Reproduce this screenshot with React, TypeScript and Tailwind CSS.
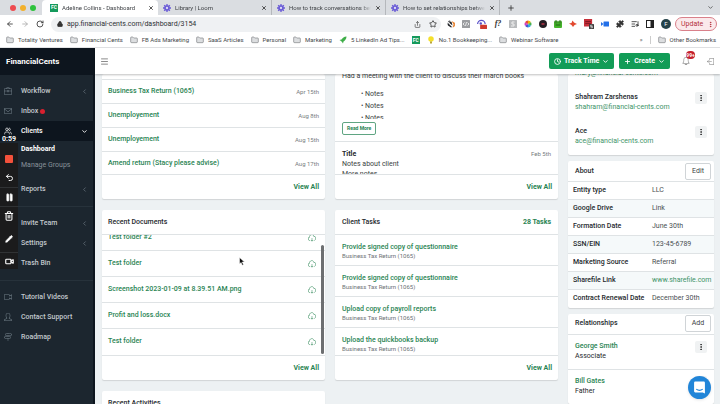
import type { ComponentType, ReactNode } from 'react';
import {
  ArrowLeft, ArrowRight, RotateCw, Lock, Share, Star, X, Plus, ChevronDown, ChevronLeft,
  EllipsisVertical, Folder, Puzzle, ListMusic, Undo2, Pause, Trash2, Pencil, Video, Users, Clock, Menu,
} from 'lucide-react';
import {
  SlBriefcase, SlEnvolope, SlCamrecorder, SlUser, SlDirections, SlLogout, SlBell, SlCloudDownload,
} from 'react-icons/sl';

type IconType = ComponentType<{ className?: string }>;

function FcLogo() {
  return (
    <span className="flex size-[8px] shrink-0 items-center justify-center bg-[#159a5c] text-[5px] font-bold text-white">
      FC
    </span>
  );
}

function LoomLogo() {
  return (
    <svg viewBox="0 0 24 24" className="size-[8px] shrink-0" aria-hidden="true">
      <circle cx="12" cy="12" r="8" fill="#6a5bd6" />
      <path d="M12 0v24M0 12h24M3.5 3.5l17 17M20.5 3.5l-17 17" stroke="#6a5bd6" strokeWidth="4" />
      <circle cx="12" cy="12" r="3.5" fill="#dcdcf5" />
    </svg>
  );
}

function BrowserTab({ title, icon, active = false }: { title: string; icon: ReactNode; active?: boolean }) {
  return (
    <div
      className={`flex h-full items-center gap-1 pr-[4px] ${
        active ? 'w-[116px] rounded-t-[4px] bg-white pl-[8px]' : 'w-[114px] border-r border-[#b5b8bc] pl-[5px]'
      }`}
    >
      {icon}
      <span className="min-w-0 flex-1 overflow-hidden mask-[linear-gradient(to_right,black_88%,transparent)] text-[6px] leading-[9px] whitespace-nowrap text-[#3e4145]">
        {title}
      </span>
      <button type="button" aria-label={`Close ${title}`}>
        <X className="size-[6px] text-[#222]" strokeWidth={3} />
      </button>
    </div>
  );
}

function Extensions() {
  const box = 'size-[8px] shrink-0';
  return (
    <div className="flex shrink-0 items-center gap-[7px]">
      <svg viewBox="0 0 16 16" className={box} aria-hidden="true">
        <path d="M7 1a4 4 0 0 0-5 5l8 8-2 1-6-4a7 7 0 0 1 5-10z" fill="#1f2125" />
        <path d="M4 2l5 2 2 7-6-5z" fill="#1f2125" />
        <path d="M9 2l6 3a6 6 0 0 1-4 10l2-6z" fill="#e98a3c" />
      </svg>
      <svg viewBox="0 0 16 16" className={box} aria-hidden="true">
        <rect width="16" height="16" rx="1" fill="#9b9da0" />
        <path d="M5 5L2 8l3 3M11 5l3 3-3 3M9 4l-2 8" stroke="#fff" strokeWidth="1.5" fill="none" />
      </svg>
      <svg viewBox="0 0 16 16" className="size-[10px] shrink-0" aria-hidden="true">
        <path d="M1 8a6 6 0 0 1 12 0" stroke="#5a50c8" strokeWidth="2" fill="none" />
        <circle cx="6" cy="7" r="2" fill="#5a50c8" />
        <rect x="5" y="9" width="11" height="7" rx="1" fill="#cf3a2e" />
      </svg>
      <span className="w-[8px] text-center font-['Liberation_Serif',serif] text-[8px] leading-[8px] font-bold text-[#333] italic">f?</span>
      <svg viewBox="0 0 16 16" className={box} aria-hidden="true">
        <rect width="16" height="16" rx="1" fill="#b9bbbd" />
        <path d="M11 4H6v4h4v4H4" stroke="#eee" strokeWidth="2" fill="none" />
      </svg>
      <svg viewBox="0 0 16 16" className={box} aria-hidden="true">
        <path d="M8 8V1a7 7 0 0 1 6 3.500z" fill="#f0b400" />
        <path d="M8 8l6-3.500a7 7 0 0 1 0 7z" fill="#4ab04f" />
        <path d="M8 8l6 3.500A7 7 0 0 1 8 15z" fill="#2ea8e0" />
        <path d="M8 8v7a7 7 0 0 1-6-3.500z" fill="#4a55d0" />
        <path d="M8 8l-6 3.500a7 7 0 0 1 0-7z" fill="#d03fc0" />
        <path d="M8 8L2 4.500A7 7 0 0 1 8 1z" fill="#e8483a" />
      </svg>
      <svg viewBox="0 0 16 16" className={box} aria-hidden="true">
        <circle cx="8" cy="8" r="8" fill="#241c22" />
        <path d="M5 6h6v4H5z" fill="#8f2c3c" />
      </svg>
      <svg viewBox="0 0 16 16" className={box} aria-hidden="true">
        <rect y="3" width="16" height="13" rx="2" fill="#45b52b" />
        <circle cx="4" cy="4" r="3.500" fill="#3a8f26" />
        <circle cx="12" cy="4" r="3.500" fill="#3a8f26" />
        <path d="M3 10h10" stroke="#205c14" strokeWidth="2" />
      </svg>
      <svg viewBox="0 0 16 16" className={box} aria-hidden="true">
        <path d="M0 7l5-1 2-5 3 4 6 3-5 2-3 4-3-4z" fill="#e2492f" />
      </svg>
      <svg viewBox="0 0 16 16" className="size-[10px] shrink-0" aria-hidden="true">
        <rect width="13" height="12" fill="#c62f3a" />
        <path d="M2 4h9M2 7h9" stroke="#7c1720" strokeWidth="1.500" />
        <rect x="8" y="8" width="8" height="8" rx="1" fill="#3c3c3c" />
        <path d="M13.500 10h-3v2h3v2h-3" stroke="#fff" fill="none" />
      </svg>
      <svg viewBox="0 0 16 16" className={box} aria-hidden="true">
        <rect x="5" y="3" width="11" height="10" rx="1" fill="#2470e8" />
        <path d="M0 4l5 4-5 4z" fill="#2470e8" />
      </svg>
      <Puzzle className="size-[8px] fill-[#333] text-[#333]" />
      <ListMusic className="size-[8px] text-[#333]" strokeWidth={2.500} />
      <svg viewBox="0 0 16 16" className={box} aria-hidden="true">
        <rect x="1" y="1" width="14" height="14" fill="none" stroke="#222" strokeWidth="2" />
        <rect x="9" y="1" width="6" height="14" fill="#222" />
      </svg>
      <span className="flex size-[10px] items-center justify-center rounded-full bg-[#25434a] text-[6px] text-white">F</span>
    </div>
  );
}

function Bookmark({ label, icon }: { label?: string; icon?: ReactNode }) {
  return (
    <a href="#" className="flex shrink-0 items-center gap-1 whitespace-nowrap">
      {icon ?? <Folder className="size-[8px] fill-[#dcdee0] text-[#7d8084]" strokeWidth={2} />}
      {label}
    </a>
  );
}

function Browser() {
  return (
    <div className="shrink-0 bg-white text-[#45484c]">
      <div className="flex h-[15px] items-center bg-[#dadde1]">
        <div className="flex w-[42px] shrink-0 gap-[4px] pl-[10px]">
          <span className="size-[6px] rounded-full bg-[#ee4b4f]" />
          <span className="size-[6px] rounded-full bg-[#f2b02b]" />
          <span className="size-[6px] rounded-full bg-[#2dc23c]" />
        </div>
        <BrowserTab title="Adeline Collins - Dashboard" icon={<FcLogo />} active />
        <BrowserTab title="Library | Loom" icon={<LoomLogo />} />
        <BrowserTab title="How to track conversations between" icon={<LoomLogo />} />
        <BrowserTab title="How to set relationships between" icon={<LoomLogo />} />
        <button type="button" aria-label="New tab" className="ml-[7px]">
          <Plus className="size-[8px] text-[#333]" strokeWidth={2.500} />
        </button>
        <ChevronDown className="mr-[6px] ml-auto size-[7px] text-[#444]" strokeWidth={2.500} />
      </div>
      <div className="flex h-[18px] items-center pr-[3px] pl-[6px]">
        <div className="flex w-[45px] shrink-0 gap-[7px]">
          <button type="button" aria-label="Back"><ArrowLeft className="size-[8px] text-[#333]" strokeWidth={2.500} /></button>
          <button type="button" aria-label="Forward"><ArrowRight className="size-[8px] text-[#aaa]" strokeWidth={2.500} /></button>
          <button type="button" aria-label="Reload"><RotateCw className="size-[8px] text-[#333]" strokeWidth={2.500} /></button>
        </div>
        <div className="mr-[6px] flex h-[15px] flex-1 items-center gap-[4px] rounded-full bg-[#eff1f3] pr-[4px] pl-[6px]">
          <Lock className="size-[6px] fill-[#333] text-[#333]" strokeWidth={3} />
          <input
            aria-label="Address"
            defaultValue="app.financial-cents.com/dashboard/3154"
            className="min-w-0 flex-1 bg-transparent text-[7px] text-[#2d3034] outline-none"
          />
          <Share className="size-[7px] text-[#555]" strokeWidth={2.500} />
          <Star className="ml-[4px] size-[8px] text-[#333]" strokeWidth={2.500} />
        </div>
        <Extensions />
        <button
          type="button"
          className="ml-[4px] flex h-[14px] w-[42px] shrink-0 items-center justify-between rounded-full border border-[#d9808a] bg-[#fbe9eb] pr-[2px] pl-[5px] text-[7px] text-[#b3303d]"
        >
          Update
          <EllipsisVertical className="size-[7px]" strokeWidth={3} />
        </button>
      </div>
      <div className="flex h-[15px] items-center gap-[7px] border-b border-[#e3e4e6] pr-[4px] pl-[6px] text-[6px]">
        <Bookmark label="Totality Ventures" />
        <Bookmark label="Financial Cents" />
        <Bookmark label="FB Ads Marketing" />
        <Bookmark label="SaaS Articles" />
        <Bookmark label="Personal" />
        <Bookmark label="Marketing" />
        <Bookmark
          label="5 LinkedIn Ad Tips..."
          icon={
            <svg viewBox="0 0 16 16" className="size-[8px]" aria-hidden="true">
              <path d="M15 1c-5 0-8 3-10 6L1 8l3 2 2 2 2 3 1-4c3-2 6-5 6-10z" fill="#3fae49" />
            </svg>
          }
        />
        <Bookmark icon={<FcLogo />} />
        <Bookmark
          label="No.1 Bookkeeping..."
          icon={
            <svg viewBox="0 0 16 16" className="size-[8px]" aria-hidden="true">
              <circle cx="8" cy="6" r="5.500" fill="#f4e02c" />
              <rect x="6" y="11" width="4" height="4" fill="#b9a53a" />
            </svg>
          }
        />
        <Bookmark label="Webinar Software" />
        <span className="ml-auto">»</span>
        <span className="h-[8px] w-px bg-[#ccc]" />
        <Bookmark label="Other Bookmarks" />
      </div>
    </div>
  );
}

function NavItem({
  label, icon: Icon, arrow = false, active = false, dot = false,
}: { label: string; icon?: IconType; arrow?: boolean; active?: boolean; dot?: boolean }) {
  return (
    <a
      href="#"
      className={`flex h-[20px] items-center pr-[5px] pl-[4px] font-medium ${active ? 'bg-[#0d151e] text-white' : ''}`}
    >
      <span className="w-[17px] shrink-0">
        {Icon && <Icon className={`size-[8px] ${active ? 'text-white' : 'text-[#73808a]'}`} />}
      </span>
      {label}
      {dot && <span className="ml-[2px] size-[5px] rounded-full bg-[#d8202f]" />}
      {arrow && (active
        ? <ChevronDown className="ml-auto size-[7px]" strokeWidth={3} />
        : <ChevronLeft className="ml-auto size-[7px] text-[#7b8790]" />)}
    </a>
  );
}

function Recorder() {
  const cell = 'flex w-full items-center justify-center';
  return (
    <div className="absolute top-[87px] left-0 w-[18px] text-white">
      <div className="h-[8px] text-center text-[7px] leading-[8px] font-bold">0:59</div>
      <div className="bg-[#1b1b1c]">
        <button type="button" aria-label="Stop recording" className={`${cell} h-[25px] pt-[6px]`}>
          <span className="size-[8px] rounded-[1px] bg-[#f4513b]" />
        </button>
        <button type="button" aria-label="Restart" className={`${cell} h-[19px]`}>
          <Undo2 className="size-[9px]" strokeWidth={2.500} />
        </button>
        <button type="button" aria-label="Pause" className={`${cell} h-[19px] border-t border-[#303234]`}>
          <Pause className="size-[9px] fill-white" />
        </button>
        <button type="button" aria-label="Delete" className={`${cell} h-[19px] border-t border-[#303234]`}>
          <Trash2 className="size-[10px]" strokeWidth={2.500} />
        </button>
        <button type="button" aria-label="Draw" className={`${cell} h-[27px]`}>
          <Pencil className="size-[8px] fill-white" />
        </button>
        <button type="button" aria-label="Camera" className={`${cell} h-[17px] border-t border-[#303234]`}>
          <Video className="size-[9px]" strokeWidth={3} />
        </button>
      </div>
    </div>
  );
}

function Sidebar() {
  return (
    <aside className="relative w-[95px] shrink-0 border-r-2 border-[#0d151e] bg-[#1c262f] text-[7px] text-[#c3c9ce]">
      <div className="flex h-[27px] items-center bg-[#0d151e] pl-[6px] text-[8px] font-bold text-white">FinancialCents</div>
      <nav className="pt-[6px]">
        <NavItem label="Workflow" icon={SlBriefcase} arrow />
        <NavItem label="Inbox" icon={SlEnvolope} dot />
        <NavItem label="Clients" icon={Users} arrow active />
        <a href="#" className="flex h-[16px] items-center pl-[21px] font-bold text-white">Dashboard</a>
        <a href="#" className="mb-[6px] flex h-[16px] items-center pl-[21px] text-[#87919a]">Manage Groups</a>
        <NavItem label="Reports" arrow />
        <hr className="mt-[7px] mb-[6px] border-[#27323b]" />
        <NavItem label="Invite Team" arrow />
        <NavItem label="Settings" arrow />
        <NavItem label="Trash Bin" />
        <hr className="mt-[7px] mb-[6px] border-[#27323b]" />
        <NavItem label="Tutorial Videos" icon={SlCamrecorder} />
        <NavItem label="Contact Support" icon={SlUser} />
        <NavItem label="Roadmap" icon={SlDirections} />
      </nav>
      <Recorder />
    </aside>
  );
}

function TopBar() {
  const button = 'flex h-[16px] items-center gap-[3px] rounded-[2px] bg-[#129c57] px-[5px] text-[7px] font-bold text-white';
  return (
    <header className="z-10 flex h-[26px] shrink-0 items-center gap-[5px] bg-white pr-[6px] pl-[5px] shadow-[0_1px_2px_rgba(0,0,0,0.25)]">
      <button type="button" aria-label="Menu" className="mr-auto">
        <Menu className="size-[9px] text-[#666]" />
      </button>
      <button type="button" className={button}>
        <Clock className="size-[7px]" strokeWidth={3} />
        Track Time
        <ChevronDown className="size-[7px]" strokeWidth={3} />
      </button>
      <button type="button" className={button}>
        <Plus className="size-[7px]" strokeWidth={3} />
        Create
        <ChevronDown className="size-[7px]" strokeWidth={3} />
      </button>
      <button type="button" aria-label="Notifications" className="relative mr-[8px] ml-[7px]">
        <SlBell className="size-[8px] text-[#777]" />
        <span className="absolute -top-[6px] left-[4px] flex h-[8px] w-[9px] items-center justify-center rounded-full bg-[#c4202c] text-[5px] font-bold text-white">
          99+
        </span>
      </button>
      <button type="button" aria-label="Log out" className="ml-[4px]">
        <SlLogout className="size-[7px] text-[#777]" />
      </button>
    </header>
  );
}

const card = 'overflow-hidden rounded-[2px] bg-white shadow-[0_1px_1px_rgba(0,0,0,0.12)]';
const line = 'border-[#dfe3e5]';

function CardFooter() {
  return (
    <div className={`flex h-[25px] items-center justify-end border-t px-[6px] ${line}`}>
      <a href="#" className="font-bold text-[#2a8453]">View All</a>
    </div>
  );
}

const works = [
  ['Business Tax Return (1065)', 'Apr 15th'],
  ['Unemployement', 'Aug 8th'],
  ['Unemployement', 'Aug 15th'],
  ['Amend return (Stacy please advise)', 'Aug 17th'],
];

function WorkCard() {
  return (
    <section className={card}>
      <div className={`h-[6px] border-b ${line}`} />
      <ul className="-mb-[2px]">
        {works.map(([name, due], i) => (
          <li key={i} className={`flex h-[24px] items-center justify-between border-b px-[6px] last:border-transparent ${line}`}>
            <a href="#" className="font-medium text-[#2a8453]">{name}</a>
            <span className="text-[6px] text-[#777c80]">{due}</span>
          </li>
        ))}
      </ul>
      <CardFooter />
    </section>
  );
}

function NotesCard() {
  return (
    <section className={`${card} flex flex-col text-[#3b3f43]`}>
      <div className="flex-1 px-[7px]">
        <p className="-mt-[4px] leading-[12px]">Had a meeting with the client to discuss their march books</p>
        <ul className="mt-[6px] h-[31px] overflow-hidden pl-[19px] leading-[12px]">
          <li>• Notes</li>
          <li>• Notes</li>
          <li>• Notes</li>
        </ul>
        <button
          type="button"
          className="mt-[3px] flex h-[13px] items-center rounded-[2px] border border-[#5fa582] px-[4px] text-[5px] font-bold text-[#2a8453]"
        >
          Read More
        </button>
      </div>
      <div className={`h-[33px] overflow-hidden border-t px-[7px] pt-[7px] leading-[10px] ${line}`}>
        <div className="flex justify-between">
          <b className="text-[#25292d]">Title</b>
          <span className="text-[6px] text-[#777c80]">Feb 5th</span>
        </div>
        <p>Notes about client</p>
        <p>More notes</p>
      </div>
      <CardFooter />
    </section>
  );
}

const documents = ['Test folder #2', 'Test folder', 'Screenshot 2023-01-09 at 8.39.51 AM.png', 'Profit and loss.docx', 'Test folder'];

function DocumentsCard() {
  return (
    <section className={card}>
      <h2 className={`flex h-[25px] items-center border-b px-[6px] font-medium ${line}`}>Recent Documents</h2>
      <div className="relative flex h-[120px] flex-col justify-end overflow-hidden">
        <ul>
          {documents.map((name, i) => (
            <li
              key={i}
              className={`flex h-[26px] items-center justify-between border-b pr-[9px] pl-[6px] last:border-transparent ${line}`}
            >
              <a href="#" className="font-medium text-[#2a8453]">{name}</a>
              <button type="button" aria-label={`Download ${name}`}>
                <SlCloudDownload className="size-[8px] text-[#2a8453]" />
              </button>
            </li>
          ))}
        </ul>
        <span className="absolute right-[1px] bottom-[1px] h-[109px] w-[3px] rounded-full bg-[#6d6f71]" />
      </div>
      <CardFooter />
    </section>
  );
}

const tasks = [
  'Provide signed copy of questionnaire',
  'Provide signed copy of questionnaire',
  'Upload copy of payroll reports',
  'Upload the quickbooks backup',
];

function TasksCard() {
  return (
    <section className={card}>
      <div className="flex h-[24px] items-center justify-between px-[7px] font-medium">
        <h2>Client Tasks</h2>
        <a href="#" className="font-bold text-[#2a8453]">28 Tasks</a>
      </div>
      <ul className="h-[121px] overflow-hidden">
        {tasks.map((name, i) => (
          <li key={i} className={`h-[31px] border-t px-[7px] pt-[7px] ${line}`}>
            <a href="#" className="block leading-[10px] font-medium text-[#2a8453]">{name}</a>
            <p className="text-[6px] leading-[8px] text-[#6c7175]">Business Tax Return (1065)</p>
          </li>
        ))}
      </ul>
      <CardFooter />
    </section>
  );
}

function MoreButton() {
  return (
    <button type="button" aria-label="More" className="flex size-[12px] shrink-0 items-center justify-center rounded-[2px] bg-[#f0f2f3]">
      <EllipsisVertical className="size-[8px] text-[#333]" strokeWidth={3} />
    </button>
  );
}

function ContactsCard() {
  return (
    <section className={`${card} h-[81px] px-[7px]`}>
      <a href="#" className="-mt-[6px] block leading-[10px] text-[#3e9468]">mary@financial-cents.com</a>
      {[['Shahram Zarshenas', 'shahram@financial-cents.com'], ['Ace', 'ace@financial-cents.com']].map(([name, mail]) => (
        <div key={name} className="mt-[14px] flex justify-between leading-[10px]">
          <div>
            <p className="font-medium">{name}</p>
            <a href="#" className="text-[#3e9468]">{mail}</a>
          </div>
          <MoreButton />
        </div>
      ))}
    </section>
  );
}

const facts = [
  ['Entity type', 'LLC'],
  ['Google Drive', 'Link'],
  ['Formation Date', 'June 30th'],
  ['SSN/EIN', '123-45-6789'],
  ['Marketing Source', 'Referral'],
  ['Sharefile Link', 'www.sharefile.com'],
  ['Contract Renewal Date', 'December 30th'],
];

function SideHeader({ title, action }: { title: string; action: string }) {
  return (
    <div className="flex h-[20px] items-center justify-between pr-[3px] pl-[7px]">
      <h2 className="font-medium">{title}</h2>
      <button type="button" className="flex h-[17px] w-[26px] items-center justify-center rounded-[2px] border border-[#d0d4d7] text-[#3b3f43]">
        {action}
      </button>
    </div>
  );
}

function AboutCard() {
  return (
    <section className={card}>
      <SideHeader title="About" action="Edit" />
      <table className="w-full table-fixed border-collapse">
        <tbody>
          {facts.map(([name, value]) => (
            <tr key={name} className={`h-[18px] border-t even:bg-[#f5f9fa] ${line}`}>
              <th scope="row" className="w-[84px] pl-[5px] text-left font-medium whitespace-nowrap">{name}</th>
              <td className="whitespace-nowrap text-[#4a4f53]">
                {value.startsWith('www') ? <a href="#" className="text-[#3e9468]">{value}</a> : value}
              </td>
            </tr>
          ))}
        </tbody>
      </table>
    </section>
  );
}

function RelationshipsCard() {
  return (
    <section className={card}>
      <SideHeader title="Relationships" action="Add" />
      {[['George Smith', 'Associate'], ['Bill Gates', 'Father']].map(([name, role]) => (
        <div key={name} className={`flex h-[35px] items-start justify-between border-t px-[7px] pt-[6px] leading-[10px] ${line}`}>
          <div>
            <a href="#" className="font-medium text-[#2a8453]">{name}</a>
            <p>{role}</p>
          </div>
          <MoreButton />
        </div>
      ))}
    </section>
  );
}

function Pointer() {
  return (
    <svg viewBox="0 0 12 18" className="pointer-events-none fixed top-[257px] left-[239px] z-20 h-[9px] w-[6px]" aria-hidden="true">
      <path d="M1 1v13l3-3 2.500 5.500 2.500-1L6.500 10H11z" fill="#111" stroke="#fff" strokeWidth="1" />
    </svg>
  );
}

export default function App() {
  return (
    <div className="flex h-screen flex-col overflow-hidden font-[Roboto,sans-serif] leading-none">
      <Browser />
      <div className="flex min-h-0 flex-1">
        <Sidebar />
        <div className="flex min-w-0 flex-1 flex-col">
          <TopBar />
          <main className="flex min-h-0 flex-1 items-start gap-[10px] overflow-hidden bg-[#edf1f3] pr-[6px] pl-[7px] text-[7px] text-[#25292d]">
            <div className="grid flex-1 grid-cols-2 gap-x-[10px] gap-y-[11px]">
              <WorkCard />
              <NotesCard />
              <DocumentsCard />
              <TasksCard />
              <section className={card}>
                <h2 className="flex h-[25px] items-center px-[6px] font-medium">Recent Activities</h2>
              </section>
            </div>
            <div className="flex w-[146px] shrink-0 flex-col gap-[6px]">
              <ContactsCard />
              <AboutCard />
              <RelationshipsCard />
            </div>
          </main>
        </div>
      </div>
      <button
        type="button"
        aria-label="Open chat"
        className="fixed right-[9px] bottom-[5px] z-20 flex size-[23px] items-center justify-center rounded-full bg-[#2185d8] shadow"
      >
        <svg viewBox="0 0 24 24" className="size-[13px]" aria-hidden="true">
          <path d="M4 1h16a2 2 0 0 1 2 2v20l-4-2H4a2 2 0 0 1-2-2V3a2 2 0 0 1 2-2z" fill="#fff" />
          <path d="M6 15c4 3 8 3 12 0" stroke="#2185d8" strokeWidth="2" fill="none" />
        </svg>
      </button>
      <Pointer />
    </div>
  );
}
